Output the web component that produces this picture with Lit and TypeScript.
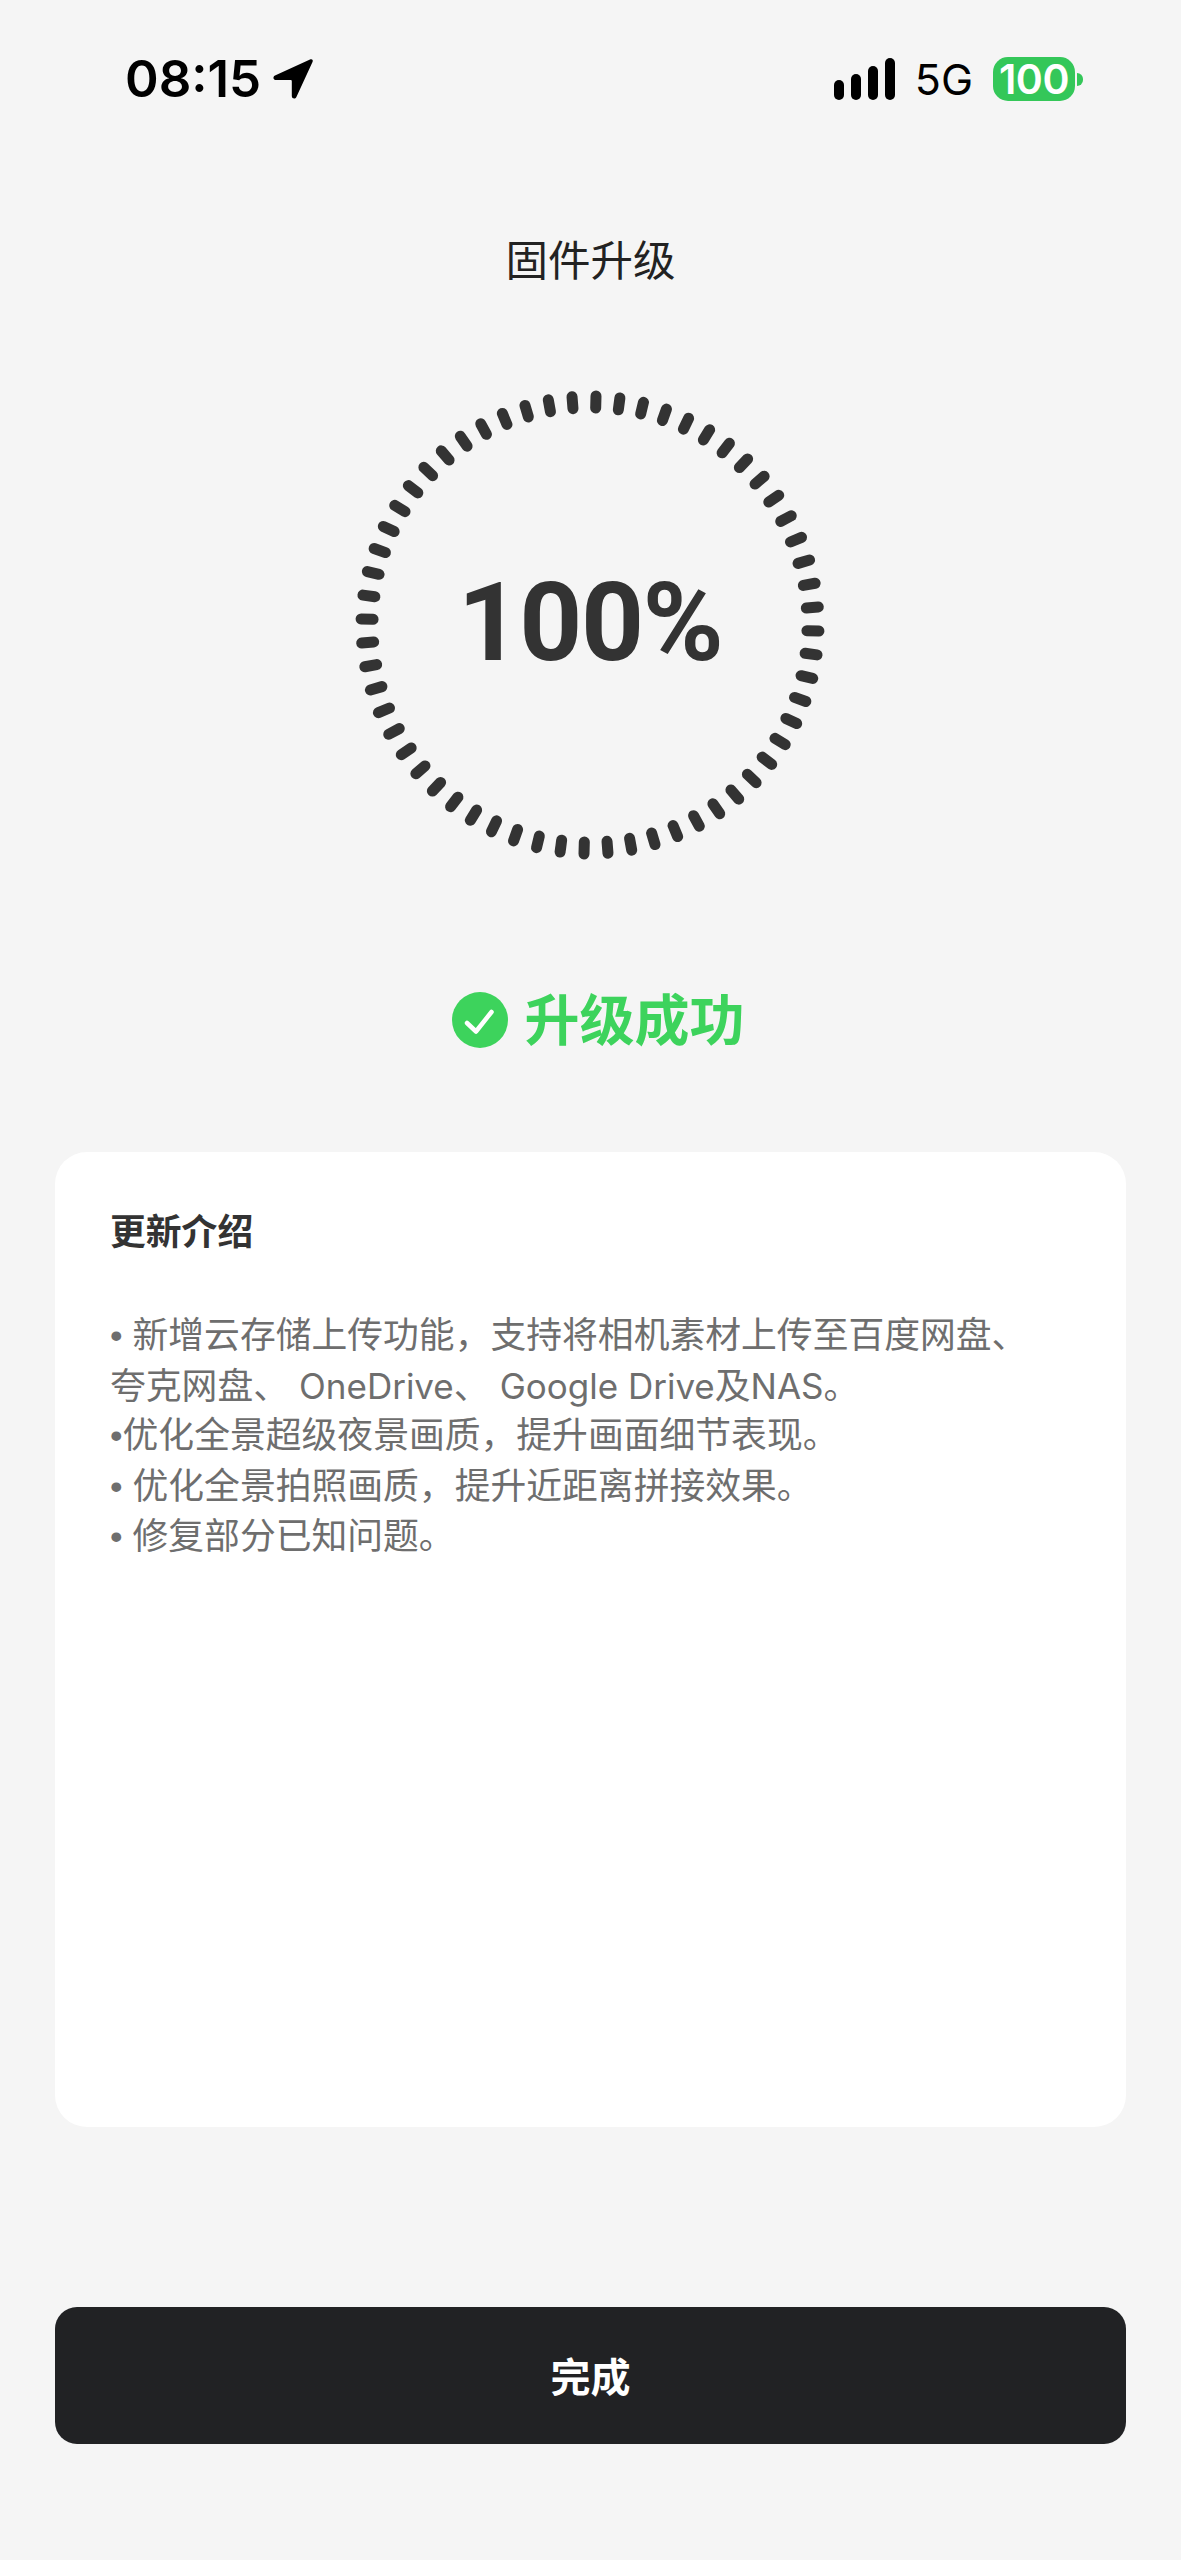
import {LitElement, css, html, svg} from 'lit';
import {customElement} from 'lit/decorators.js';

const SIGNAL_BARS = [20, 26, 34, 42];

// 60 ticks, turned 1.5deg off the vertical like the reference
const TICKS = Array.from({length: 60}, (_, i) => i * 6 + 1.5);

const dot = html`<span class="dot">•</span>`;
const dotSpaced = html`<span class="dot">• </span>`;

const NOTES = [
    html`${dotSpaced}新增云存储上传功能，支持将相机素材上传至百度网盘、`,
    html`夸克网盘、 <span class="latin">OneDrive</span>、 <span class="latin">Google Drive</span>及<span class="latin">NAS</span>。`,
    html`${dot}优化全景超级夜景画质，提升画面细节表现。`,
    html`${dotSpaced}优化全景拍照画质，提升近距离拼接效果。`,
    html`${dotSpaced}修复部分已知问题。`,
];

@customElement('app-root')
export class AppRoot extends LitElement {
    static styles = css`
        :host {
            display: block;
            width: 1181px;
            height: 2560px;
            background: #f5f5f5;
            font-family: "Inter", "Noto Sans CJK SC", sans-serif;
            overflow: hidden;
        }

        .page {
            height: 100%;
            display: flex;
            flex-direction: column;
            align-items: center;
        }

        .status {
            align-self: stretch;
            height: 58px;
            margin-top: 50px;
            padding: 0 98px 0 125px;
            display: flex;
            justify-content: space-between;
            align-items: center;
            color: #000;
        }

        .status-left,
        .status-right {
            display: flex;
            align-items: center;
        }

        .time {
            font-size: 51px;
            font-weight: 600;
            line-height: 44px;
        }

        .arrow {
            width: 42px;
            height: 42px;
            margin-left: 11px;
        }

        .signal {
            display: flex;
            align-items: flex-end;
            gap: 7px;
            height: 42px;
        }

        .signal span {
            width: 10px;
            border-radius: 5px;
            background: #000;
        }

        .net {
            margin-left: 20px;
            font-size: 43px;
            font-weight: 400;
            line-height: 44px;
        }

        .battery {
            margin-left: 20px;
            width: 82px;
            height: 44px;
            border-radius: 15px;
            background: #34c759;
            color: #fff;
            font-size: 41px;
            font-weight: 600;
            line-height: 44px;
            text-align: center;
            letter-spacing: -0.5px;
        }

        .nub {
            width: 6px;
            height: 13px;
            margin-left: 2px;
            border-radius: 0 6px 6px 0;
            background: #34c759;
        }

        .title {
            margin-top: 125px;
            font-size: 42.5px;
            line-height: 56px;
            color: #222;
        }

        .ring {
            margin-top: 101px;
            margin-left: -1px;
            width: 470px;
            height: 470px;
            display: grid;
            place-items: center;
        }

        .ring > * {
            grid-area: 1 / 1;
        }

        .ring svg {
            width: 470px;
            height: 470px;
        }

        .percent {
            margin-top: -4px;
            font-family: Roboto, sans-serif;
            font-size: 110px;
            font-weight: 700;
            letter-spacing: -1.5px;
            line-height: 130px;
            color: #333;
        }

        .result {
            margin-top: 132px;
            margin-left: 16px;
            display: flex;
            align-items: center;
            gap: 16px;
            font-size: 55px;
            font-weight: 700;
            line-height: 56px;
            color: #3dd35c;
        }

        .result svg {
            width: 56px;
            height: 56px;
        }

        .card {
            margin-top: 104px;
            width: 1071px;
            height: 975px;
            box-sizing: border-box;
            padding: 57px 55px;
            background: #fff;
            border-radius: 32px;
        }

        .card h2 {
            margin: 0;
            font-size: 35.8px;
            font-weight: 700;
            line-height: 46px;
            color: #333;
        }

        .notes {
            margin-top: 56px;
            font-size: 35.8px;
            line-height: 49.5px;
            color: #6e6e6e;
            white-space: nowrap;
        }

        .dot {
            font-family: "Liberation Sans", sans-serif;
        }

        .latin {
            font-size: 35px;
        }

        .done {
            margin-top: 180px;
            width: 1071px;
            height: 137px;
            border: 0;
            padding: 0 0 2px;
            border-radius: 22px;
            background: #212224;
            color: #fff;
            font-family: inherit;
            font-size: 40px;
            font-weight: 700;
        }
    `;

    render() {
        return html`
            <div class="page">
                <div class="status">
                    <div class="status-left">
                        <span class="time">08:15</span>
                        <svg class="arrow" viewBox="0 0 42 42">
                            <path d="M38 1.500 3 17.500c-2.500 1.200-1.800 4.600 1 4.600h14.600c.7 0 1.200.5 1.200 1.200v14.600c0 2.800 3.400 3.500 4.600 1L40.500 4c1-2-.6-3.400-2.500-2.500z" fill="#000"></path>
                        </svg>
                    </div>
                    <div class="status-right">
                        <div class="signal">
                            ${SIGNAL_BARS.map((h) => html`<span style="height: ${h}px"></span>`)}
                        </div>
                        <span class="net">5G</span>
                        <div class="battery">100</div>
                        <div class="nub"></div>
                    </div>
                </div>

                <div class="title">固件升级</div>

                <div class="ring">
                    <svg viewBox="-235 -235 470 470">
                        ${TICKS.map((a) => svg`
                            <line
                                x1="0" y1="-229" x2="0" y2="-217"
                                stroke="#333" stroke-width="11" stroke-linecap="round"
                                transform="rotate(${a})"
                            ></line>
                        `)}
                    </svg>
                    <div class="percent">100%</div>
                </div>

                <div class="result">
                    <svg viewBox="0 0 56 56">
                        <circle cx="28" cy="28" r="28" fill="#3dd35c"></circle>
                        <path d="M15 31 24 39.500 39.500 20" fill="none" stroke="#fff" stroke-width="4.500" stroke-linecap="round" stroke-linejoin="round"></path>
                    </svg>
                    <span>升级成功</span>
                </div>

                <div class="card">
                    <h2>更新介绍</h2>
                    <div class="notes">
                        ${NOTES.map((line) => html`<div>${line}</div>`)}
                    </div>
                </div>

                <button class="done">完成</button>
            </div>
        `;
    }
}
